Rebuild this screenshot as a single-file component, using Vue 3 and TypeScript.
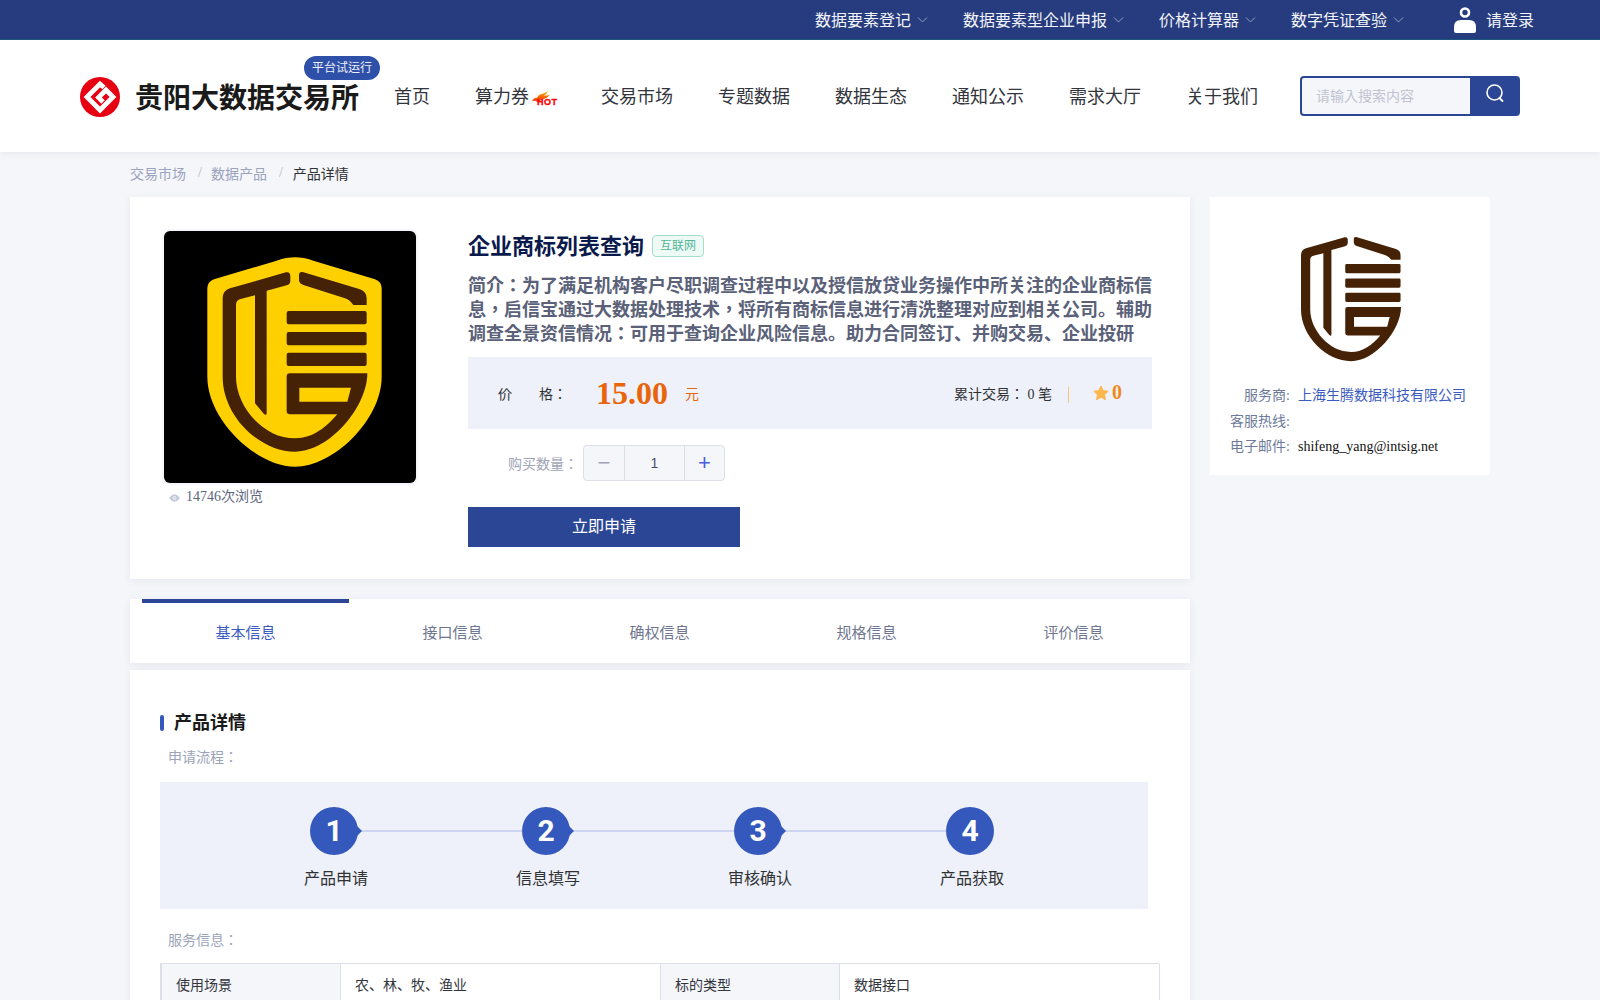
<script setup lang="ts">
const topItems = ['数据要素登记', '数据要素型企业申报', '价格计算器', '数字凭证查验']
const navItems = [
  { label: '首页', hot: false },
  { label: '算力券', hot: true },
  { label: '交易市场', hot: false },
  { label: '专题数据', hot: false },
  { label: '数据生态', hot: false },
  { label: '通知公示', hot: false },
  { label: '需求大厅', hot: false },
  { label: '关于我们', hot: false },
]
const tabs = ['基本信息', '接口信息', '确权信息', '规格信息', '评价信息']
const steps = ['产品申请', '信息填写', '审核确认', '产品获取']
const markPath =
  'M408 157Q421 154 421 170L421 182Q421 193 410 196L350 212L350 578Q350 590 340 580L315 550L315 226L272 237Q258 240 258 255L258 470C258 560 340 655 435 655C490 655 530 620 562 583L420 583Q410 583 410 573L410 470Q410 460 420 460L652 460C652 560 540 695 435 695C330 695 218 590 218 470L218 235Q218 212 240 205ZM448 503L448 545L592 545L603 503Z' +
  'M458 156L630 208Q650 215 650 235L650 255L610 255Q600 240 585 235L460 195Q447 190 447 180L447 165Q447 154 458 156Z' +
  'M416 273H644Q650 273 650 279V307Q650 313 644 313H416Q410 313 410 307V279Q410 273 416 273Z' +
  'M416 336H644Q650 336 650 342V370Q650 376 644 376H416Q410 376 410 370V342Q410 336 416 336Z' +
  'M416 398H644Q650 398 650 404V432Q650 438 644 438H416Q410 438 410 432V404Q410 398 416 398Z'
const shieldPath =
  'M435 112Q460 112 490 122L675 178Q695 185 695 205L695 470C695 600 550 740 435 740C320 740 172 600 172 470L172 205Q172 185 192 178L380 122Q410 112 435 112Z'
</script>

<template>
  <div class="page">
    <div class="topbar">
      <div v-for="item in topItems" :key="item" class="top-item">
        <span>{{ item }}</span>
        <svg class="chev" viewBox="0 0 11 6"><path d="M1 .5l4.500 4.500 4.500-4.500" fill="none" stroke="#8f9cc4" stroke-width="1" /></svg>
      </div>
      <div class="login">
        <svg class="person" viewBox="0 0 22 26">
          <circle cx="11" cy="5.500" r="4" fill="none" stroke="#fff" stroke-width="2.600" />
          <path d="M0 24V20Q0 13 7 13H15Q22 13 22 20V24Q22 26 20 26H2Q0 26 0 24Z" fill="#fff" />
        </svg>
        <span>请登录</span>
      </div>
    </div>

    <header class="header">
      <div class="brand">
        <svg class="logo" viewBox="0 0 40 40">
          <circle cx="20" cy="20" r="20" fill="#e60012" />
          <path d="M24 10.500L20 7 7 20 20 33 33 20 26 13 18.500 20.500 23 25" fill="none" stroke="#fff" stroke-width="4.800" stroke-linejoin="miter" />
        </svg>
        <span class="brand-name">贵阳大数据交易所</span>
        <span class="badge">平台试运行</span>
      </div>
      <nav class="nav">
        <div v-for="n in navItems" :key="n.label" class="nav-item">
          <span>{{ n.label }}</span>
          <span v-if="n.hot" class="hot">
            <svg class="flame" viewBox="0 0 20 12">
              <defs>
                <linearGradient id="fl" x1="0" y1="0" x2="0" y2="1">
                  <stop offset="0" stop-color="#ffb400" />
                  <stop offset="1" stop-color="#f02a10" />
                </linearGradient>
              </defs>
              <path d="M0 11Q2 7 6 7Q7 4 12 3Q15 2 18 0Q16 4 13 5Q17 5 20 4Q17 8 12 9L6 12Q3 10 0 11Z" fill="url(#fl)" />
            </svg>
            <span class="hot-text">HOT</span>
          </span>
        </div>
      </nav>
      <div class="search">
        <div class="search-input">请输入搜索内容</div>
        <div class="search-btn">
          <svg viewBox="0 0 20 20" class="search-icon">
            <circle cx="9.500" cy="9.500" r="7.500" fill="none" stroke="#fff" stroke-width="1.600" />
            <path d="M14.500 15l3 3" stroke="#fff" stroke-width="1.800" stroke-linecap="round" />
          </svg>
        </div>
      </div>
    </header>

    <div class="crumbs">
      <span class="crumb">交易市场</span>
      <span class="sep">/</span>
      <span class="crumb">数据产品</span>
      <span class="sep">/</span>
      <span class="crumb-now">产品详情</span>
    </div>

    <div class="columns">
      <main class="left">
        <section class="card product">
          <div class="media">
            <div class="media-frame">
              <svg class="media-img" viewBox="42 33 756 756">
                <rect x="42" y="33" width="756" height="756" fill="#000" />
                <path :d="shieldPath" fill="#ffd000" />
                <path :d="markPath" fill="#452206" fill-rule="evenodd" />
              </svg>
            </div>
            <div class="views">
              <svg class="eye" viewBox="0 0 12 8">
                <path d="M0 4Q3 0 6 0T12 4Q9 8 6 8T0 4Z" fill="#c3c9d8" />
                <circle cx="6" cy="4" r="2" fill="#fff" />
                <circle cx="6" cy="4" r="1.200" fill="#c3c9d8" />
              </svg>
              <span>14746次浏览</span>
            </div>
          </div>
          <div class="info">
            <div class="title-row">
              <h1 class="title">企业商标列表查询</h1>
              <span class="tag">互联网</span>
            </div>
            <p class="desc">简介：为了满足机构客户尽职调查过程中以及授信放贷业务操作中所关注的企业商标信息<span class="punct">，</span>启信宝通过大数据处理技术<span class="punct">，</span>将所有商标信息进行清洗整理对应到相关公司。辅助调查全景资信情况：可用于查询企业风险信息。助力合同签订、并购交易、企业投研</p>
            <div class="price-box">
              <span class="price-label"><span class="price-first">价</span>格：</span>
              <span class="price">15.00</span>
              <span class="unit">元</span>
              <span class="trade">累计交易： 0 笔</span>
              <span class="vline"></span>
              <svg class="star" viewBox="0 0 24 24"><path d="M12 1.500l3.300 6.900 7.500 1-5.500 5.200 1.400 7.500L12 18.400l-6.700 3.700 1.400-7.500L1.200 9.400l7.500-1z" fill="#fdb84d" stroke="#fdb84d" stroke-width="1.500" stroke-linejoin="round" /></svg>
              <span class="score">0</span>
            </div>
            <div class="qty-row">
              <span class="qty-label">购买数量：</span>
              <div class="stepper">
                <span class="step-btn minus">−</span>
                <span class="step-val">1</span>
                <span class="step-btn plus">+</span>
              </div>
            </div>
            <button class="apply">立即申请</button>
          </div>
        </section>

        <section class="tabs">
          <div v-for="(t, i) in tabs" :key="t" class="tab" :class="{ active: i === 0 }">{{ t }}</div>
        </section>

        <section class="card details">
          <h2 class="sec-title">产品详情</h2>
          <div class="sub">申请流程：</div>
          <div class="flow">
            <div v-for="(s, i) in steps" :key="s" class="flow-step">
              <div class="flow-top">
                <div class="flow-num">{{ i + 1 }}<span v-if="i < steps.length - 1" class="flow-tip"></span></div>
                <div v-if="i < steps.length - 1" class="flow-line"></div>
              </div>
              <div class="flow-label">{{ s }}</div>
            </div>
          </div>
          <div class="sub sub-service">服务信息：</div>
          <div class="table">
            <div class="cell head">使用场景</div>
            <div class="cell">农、林、牧、渔业</div>
            <div class="cell head">标的类型</div>
            <div class="cell">数据接口</div>
          </div>
        </section>
      </main>

      <aside class="side">
        <svg class="side-logo" viewBox="218 155 434 540">
          <path :d="markPath" fill="#452206" fill-rule="evenodd" />
        </svg>
        <div class="side-row"><span class="side-key">服务商:</span><span class="side-link">上海生腾数据科技有限公司</span></div>
        <div class="side-row"><span class="side-key">客服热线:</span></div>
        <div class="side-row"><span class="side-key">电子邮件:</span><span class="side-val">shifeng_yang@intsig.net</span></div>
      </aside>
    </div>
  </div>
</template>

<style>
html, body { margin: 0; height: 1000px; overflow: hidden; background: #f5f6fa; }
</style>

<style scoped>
.page {
  height: 1000px;
  overflow: hidden;
  background: #f5f6fa;
  font-family: "Liberation Serif", "Noto Sans CJK JP", serif;
  font-size: 14px;
  color: #303133;
}
.topbar {
  height: 39px;
  box-sizing: content-box;
  border-bottom: 1px solid #1d5a7e;
  background: #273c7e;
  display: flex;
  align-items: center;
  justify-content: flex-end;
  padding-right: 66px;
  color: #f2f4fa;
  font-size: 16px;
}
.top-item { display: flex; align-items: center; gap: 6px; margin-right: 35px; padding-bottom: 2px; }
.chev { width: 11px; height: 6px; margin-top: 2px; }
.login { display: flex; align-items: center; gap: 10px; margin-left: 15px; }
.login span { padding-bottom: 2px; }
.person { width: 22px; height: 26px; }
.header {
  height: 112px;
  background: #fff;
  box-shadow: 0 2px 6px rgba(40, 50, 90, 0.07);
  display: flex;
  align-items: center;
  padding: 0 80px;
  position: relative;
}
.brand { display: flex; align-items: center; gap: 15px; position: relative; margin-top: 2px; }
.logo { width: 40px; height: 40px; }
.brand-name { font-size: 28px; font-weight: 700; color: #1a1a1a; padding-bottom: 3px; }
.badge {
  position: absolute;
  left: 224px;
  top: -20px;
  width: 76px;
  height: 24px;
  line-height: 24px;
  text-align: center;
  border-radius: 12px;
  background: #2f50a8;
  color: #eef1fb;
  font-size: 12px;
}
.nav { display: flex; align-items: center; gap: 45px; margin: -2px 0 0 35px; font-size: 18px; color: #33353d; }
.nav-item { display: flex; align-items: center; }
.hot { position: relative; display: block; width: 27px; height: 20px; }
.flame { position: absolute; left: 3px; top: 6px; width: 18px; height: 11px; }
.hot-text {
  position: absolute;
  left: 8px;
  top: 13px;
  font: 900 9px/9px "Liberation Sans", sans-serif;
  letter-spacing: 0.5px;
  -webkit-text-stroke: 0.3px #f00;
  color: #f00;
}
.search {
  margin-left: auto;
  width: 220px;
  height: 40px;
  box-sizing: border-box;
  border: 2px solid #2b4695;
  border-radius: 4px;
  display: flex;
  background: #2b4695;
  overflow: hidden;
}
.search-input {
  flex: 1;
  background: #f5f6fa;
  color: #c0c4d2;
  line-height: 38px;
  padding-left: 14px;
}
.search-btn { width: 48px; display: flex; align-items: center; justify-content: center; }
.search-icon { width: 20px; height: 20px; margin: -6px 0 0 2px; }
.crumbs {
  height: 42px;
  margin-bottom: 3px;
  padding-left: 130px;
  display: flex;
  align-items: center;
}
.crumb { color: #9ba3bd; }
.sep { color: #b0b6c8; margin: 0 9px 0 12px; }
.crumb-now { color: #303133; margin-left: 1px; }
.columns { display: flex; gap: 20px; padding: 0 110px 0 130px; align-items: flex-start; }
.left { width: 1060px; flex: none; }
.card { background: #fff; box-shadow: 0 2px 8px rgba(40, 50, 90, 0.07); }
.product { display: flex; padding: 32px 38px 32px 32px; gap: 50px; }
.media { width: 256px; flex: none; }
.media-frame {
  width: 252px;
  height: 252px;
  border: 2px solid #f5f6fa;
  border-radius: 8px;
}
.media-img { display: block; width: 252px; height: 252px; border-radius: 6px; }
.views { display: flex; align-items: center; gap: 6px; padding-left: 7px; margin-top: 4px; color: #5c6580; line-height: 16px; }
.eye { width: 11px; height: 8px; margin-top: 2px; }
.info { flex: 1; min-width: 0; }
.title-row { display: flex; align-items: center; height: 30px; gap: 8px; }
.title { margin: 0; font-size: 22px; font-weight: 700; color: #0b1a4d; }
.tag {
  box-sizing: border-box;
  width: 52px;
  height: 22px;
  margin-top: 4px;
  line-height: 20px;
  text-align: center;
  border: 1px solid #a6dcca;
  border-radius: 4px;
  background: #eefaf6;
  color: #55b597;
  font-size: 12px;
}
.desc {
  margin: 15px 0 11px;
  font-size: 18px;
  font-weight: 700;
  line-height: 24px;
  height: 72px;
  overflow: hidden;
  color: #5a6178;
}
.punct { font-family: "Noto Sans CJK TC", sans-serif; line-height: 0; }
.price-box {
  height: 72px;
  background: #eef1fa;
  display: flex;
  align-items: center;
  padding: 0 30px;
}
.price-first { margin-right: 27px; }
.price { margin-left: 29px; font-size: 32px; font-weight: 700; color: #e8650a; }
.unit { margin-left: 17px; color: #e8650a; }
.trade { margin-left: auto; }
.vline { width: 1px; height: 16px; background: #f5c77e; margin: 4px 24px 0 16px; }
.star { width: 16px; height: 16px; margin-top: -1px; }
.score { margin-left: 3px; font-size: 20px; font-weight: 700; color: #f08a1c; margin-top: -1px; }
.qty-row { display: flex; align-items: center; margin-top: 16px; padding-left: 40px; height: 36px; }
.qty-label { color: #a0a5b8; margin-right: 5px; }
.stepper {
  box-sizing: border-box;
  width: 142px;
  height: 36px;
  border: 1px solid #dcdfe6;
  border-radius: 4px;
  display: flex;
  background: #f5f6fa;
}
.step-btn { width: 41px; box-sizing: border-box; text-align: center; font: 22px/33px "Liberation Sans", sans-serif; }
.minus { color: #a0a5b8; border-right: 1px solid #dcdfe6; }
.plus { width: 40px; color: #4a5fe0; border-left: 1px solid #dcdfe6; }
.step-val { flex: 1; text-align: center; line-height: 34px; color: #4a5068; font-family: "Liberation Sans", sans-serif; }
.apply {
  display: block;
  width: 272px;
  height: 40px;
  margin-top: 26px;
  border: 0;
  padding: 0 0 5px;
  background: #2b4695;
  color: #fff;
  font: inherit;
  font-size: 16px;
}
.tabs {
  margin-top: 20px;
  height: 64px;
  box-sizing: border-box;
  padding: 0 12px;
  background: #fff;
  display: flex;
  box-shadow: 0 2px 8px rgba(40, 50, 90, 0.08);
}
.tab {
  width: 207px;
  box-sizing: border-box;
  border-top: 4px solid transparent;
  padding-top: 18px;
  text-align: center;
  font-size: 15px;
  color: #6f7690;
}
.tab.active { border-top-color: #2b4695; color: #3b5cc0; }
.details { margin-top: 7px; padding: 40px 30px 60px; }
.sec-title {
  margin: 0;
  font-size: 18px;
  font-weight: 700;
  color: #1a1a1a;
  line-height: 26px;
  display: flex;
  align-items: center;
  gap: 10px;
}
.sec-title::before {
  content: "";
  width: 4px;
  height: 16px;
  border-radius: 2px;
  background: #3558bd;
}
.sub { color: #9ba3b8; padding-left: 8px; margin-top: 12px; line-height: 20px; }
.sub-service { margin-top: 22px; }
.flow {
  margin-top: 14px;
  width: 988px;
  height: 127px;
  background: #eef1fa;
  display: flex;
  padding: 25px 0 0 150px;
  box-sizing: border-box;
}
.flow-step { width: 212px; flex: none; }
.flow-top { display: flex; align-items: center; height: 48px; }
.flow-num {
  position: relative;
  width: 48px;
  height: 48px;
  border-radius: 50%;
  background: #3558bd;
  color: #fff;
  font: 700 30px/48px Roboto, sans-serif;
  text-align: center;
  flex: none;
}
.flow-tip {
  position: absolute;
  right: -4px;
  top: 19px;
  border-left: 5px solid #3558bd;
  border-top: 5px solid transparent;
  border-bottom: 5px solid transparent;
}
.flow-line { flex: 1; height: 2px; background: #ccd6f0; }
.flow-label {
  width: 80px;
  margin: 11px 0 0 -14px;
  text-align: center;
  font-size: 16px;
  line-height: 22px;
  color: #303133;
  font-family: "Noto Sans CJK JP", sans-serif;
}
.table {
  margin: 12px 0 0;
  width: 999px;
  display: grid;
  grid-template-columns: 179px 320px 179px 320px;
  border-top: 1px solid #dcdfe8;
  border-left: 2px solid #dcdfe8;
  box-sizing: border-box;
}
.cell {
  height: 46px;
  line-height: 44px;
  padding-left: 14px;
  box-sizing: border-box;
  border-right: 1px solid #dcdfe8;
  border-bottom: 1px solid #dcdfe8;
  color: #33353d;
}
.head { background: #f5f6fa; }
.side {
  width: 280px;
  flex: none;
  height: 278px;
  box-sizing: border-box;
  background: #fff;
  padding-top: 39px;
}
.side-logo { display: block; width: 100px; height: 126px; margin: 0 0 21px 91px; }
.side-row { display: flex; height: 25.500px; line-height: 25.500px; }
.side-key { width: 80px; text-align: right; color: #6e7a9a; flex: none; }
.side-link { margin-left: 8px; color: #3b5cc0; }
.side-val { margin-left: 8px; color: #111; }
</style>
